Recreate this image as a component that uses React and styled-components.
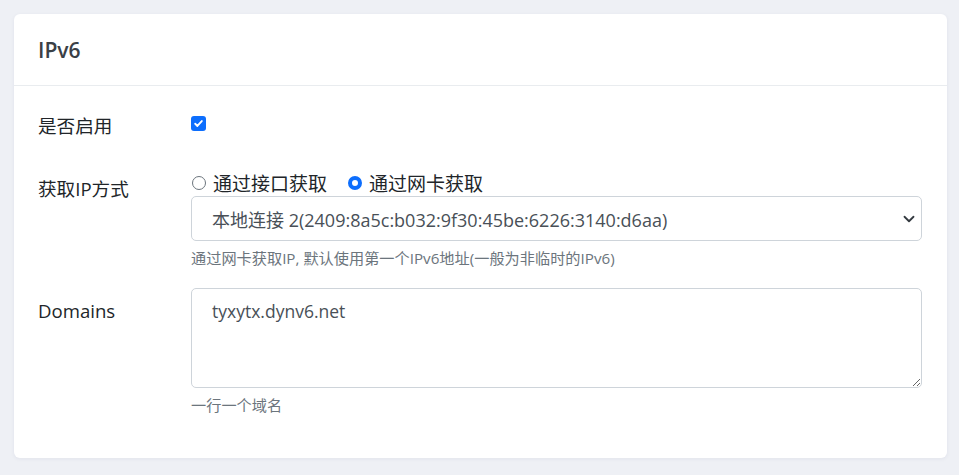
import React from 'react'
import styled, { createGlobalStyle } from 'styled-components';

const GlobalStyle = createGlobalStyle`
    * {
        box-sizing: border-box;
    }
    body {
        margin: 0;
        background: #eef0f5;
        font-family: "Open Sans", "Noto Sans CJK SC", sans-serif;
        color: #212529;
    }
`;

export default function App() {
    return (
        <>
        <GlobalStyle />
        <Page>
            <Card>
                <CardHeader>
                    <Title>IPv6</Title>
                </CardHeader>
                <CardBody>
                    <Row $gap={27}>
                        <Label $top={2}>是否启用</Label>
                        <Field>
                            <CheckLine>
                                <Checkbox>
                                    <svg width="11" height="11" viewBox="0 0 20 20">
                                        <path d="M4 10.5l4 4 8-9" fill="none" stroke="#fff" strokeWidth="3.4" strokeLinecap="round" strokeLinejoin="round" />
                                    </svg>
                                </Checkbox>
                            </CheckLine>
                        </Field>
                    </Row>
                    <Row $gap={19}>
                        <Label $top={9}>获取IP方式</Label>
                        <Field>
                            <RadioLine>
                                <RadioItem>
                                    <Radio />
                                    通过接口获取
                                </RadioItem>
                                <RadioItem>
                                    <Radio $checked />
                                    通过网卡获取
                                </RadioItem>
                            </RadioLine>
                            <Select>
                                <span>本地连接 2(2409:8a5c:b032:9f30:45be:6226:3140:d6aa)</span>
                                <svg width="12" height="12" viewBox="0 0 16 16">
                                    <path d="M2 5l6 6 6-6" fill="none" stroke="#343a40" strokeWidth="2.4" strokeLinecap="round" strokeLinejoin="round" />
                                </svg>
                            </Select>
                            <Help>通过网卡获取IP, 默认使用第一个IPv6地址(一般为非临时的IPv6)</Help>
                        </Field>
                    </Row>
                    <Row $gap={0}>
                        <Label $top={9}>Domains</Label>
                        <Field>
                            <TextArea defaultValue="tyxytx.dynv6.net" />
                            <Help>一行一个域名</Help>
                        </Field>
                    </Row>
                </CardBody>
            </Card>
        </Page>
        </>
    );
};

const Page = styled.div `
    padding: 14px 12px 17px 14px;
`;
const Card = styled.section `
    background: #fff;
    border-radius: 6px;
    box-shadow: 0 1px 4px rgba(30, 40, 80, 0.06);
`;
const CardHeader = styled.div `
    height: 72px;
    padding: 0 24px;
    display: flex;
    align-items: center;
    border-bottom: 1px solid #e9ecef;
`;
const Title = styled.h4 `
    margin: 0;
    font-size: 21px;
    font-weight: 600;
    color: #3a4046;
`;
const CardBody = styled.div `
    padding: 24px 25px 42px 24px;
`;
const Row = styled.div `
    display: grid;
    grid-template-columns: 153px 1fr;
    margin-bottom: ${p => p.$gap}px;
`;
const Label = styled.div `
    font-size: 18.6px;
    line-height: 27px;
    padding-top: ${p => p.$top}px;
    color: #212529;
`;
const Field = styled.div `
    display: flex;
    flex-direction: column;
`;
const CheckLine = styled.div `
    height: 27px;
    display: flex;
    align-items: center;
`;
const Checkbox = styled.span `
    width: 15px;
    height: 15px;
    border-radius: 3px;
    background: #0d6efd;
    display: flex;
    align-items: center;
    justify-content: center;
`;
const RadioLine = styled.div `
    display: flex;
    gap: 20px;
    height: 27px;
    align-items: center;
    margin-top: 3px;
`;
const RadioItem = styled.label `
    display: flex;
    align-items: center;
    gap: 7px;
    font-size: 19px;
    color: #212529;
`;
const Radio = styled.span `
    width: 14px;
    height: 14px;
    border-radius: 50%;
    border: ${p => p.$checked ? '4px solid #0d6efd' : '1px solid #6c757d'};
    background: #fff;
    margin-left: 1px;
`;
const Select = styled.div `
    height: 45px;
    border: 1px solid #ced4da;
    border-radius: 5px;
    padding: 0 6px 0 20px;
    display: flex;
    align-items: center;
    justify-content: space-between;
    font-size: 18px;
    color: #495057;
`;
const Help = styled.div `
    margin-top: 6px;
    font-size: 15.2px;
    line-height: 22px;
    color: #6c757d;
`;
const TextArea = styled.textarea `
    height: 100px;
    border: 1px solid #ced4da;
    border-radius: 5px;
    padding: 9px 20px;
    font-family: "Open Sans", "Noto Sans CJK SC", sans-serif;
    font-size: 17.5px;
    line-height: 27px;
    color: #495057;
    resize: vertical;
    outline: none;
`;
